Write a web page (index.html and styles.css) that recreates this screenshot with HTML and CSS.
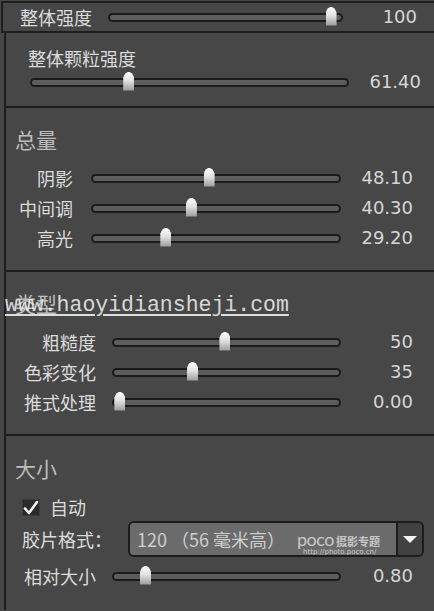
FILE: index.html
```html
<!DOCTYPE html>
<html lang="zh-CN">
<head>
  <meta charset="UTF-8">
  <title>颗粒</title>
  <link rel="stylesheet" href="styles.css">
</head>
<body>
  <div class="topbar">
    <span class="label">整体强度</span>
    <div class="track"><span class="thumb" style="left: 95.7%"></span></div>
    <span class="value">100</span>
  </div>

  <div class="panel">
    <div class="sec grain">
      <div class="grain-title">整体颗粒强度</div>
      <div class="grain-row">
        <div class="track"><span class="thumb" style="left: 30.7%"></span></div>
        <span class="value">61.40</span>
      </div>
    </div>

    <div class="sec">
      <div class="heading">总量</div>
      <div class="row narrow">
        <span class="label">阴影</span>
        <div class="track"><span class="thumb" style="left: 47.2%"></span></div>
        <span class="value">48.10</span>
      </div>
      <div class="row narrow">
        <span class="label">中间调</span>
        <div class="track"><span class="thumb" style="left: 40%"></span></div>
        <span class="value">40.30</span>
      </div>
      <div class="row narrow">
        <span class="label">高光</span>
        <div class="track"><span class="thumb" style="left: 29.6%"></span></div>
        <span class="value">29.20</span>
      </div>
    </div>

    <div class="sec">
      <div class="heading">类型</div>
      <div class="row wide">
        <span class="label">粗糙度</span>
        <div class="track"><span class="thumb" style="left: 49.3%"></span></div>
        <span class="value">50</span>
      </div>
      <div class="row wide">
        <span class="label">色彩变化</span>
        <div class="track"><span class="thumb" style="left: 34.9%"></span></div>
        <span class="value">35</span>
      </div>
      <div class="row wide">
        <span class="label">推式处理</span>
        <div class="track"><span class="thumb" style="left: 2.6%"></span></div>
        <span class="value">0.00</span>
      </div>
    </div>

    <div class="sec size">
      <div class="heading">大小</div>
      <div class="check-row">
        <span class="checkbox">
          <svg width="16" height="15" viewBox="0 0 16 15"><path d="M2 8.5 L6 13 L14 2" fill="none" stroke="#f4f4f4" stroke-width="2.6" stroke-linecap="round" stroke-linejoin="round"/></svg>
        </span>
        <span class="label">自动</span>
      </div>
      <div class="film-row">
        <span class="label">胶片格式：</span>
        <div class="dropdown">
          <div class="dd-field">
            <span class="dd-text">120 （56 毫米高）</span>
            <span class="poco"><b>poco</b><i>摄影专题</i><small>http://photo.poco.cn/</small></span>
          </div>
          <div class="dd-btn"><span class="arrow"></span></div>
        </div>
      </div>
      <div class="row wide last">
        <span class="label">相对大小</span>
        <div class="track"><span class="thumb" style="left: 14%"></span></div>
        <span class="value">0.80</span>
      </div>
    </div>
  </div>

  <div class="mark">www.haoyidiansheji.com</div>
</body>
</html>
```

FILE: styles.css
```css
body {
  margin: 0;
  width: 434px;
  height: 611px;
  overflow: hidden;
  position: relative;
  background: #474747;
  font-family: "Noto Sans CJK SC", "Noto Sans", sans-serif;
  color: #dadada;
}

.label {
  font-size: 18px;
  line-height: 24px;
  color: #dcdcdc;
  white-space: nowrap;
}

.value {
  font-family: "DejaVu Sans", sans-serif;
  font-size: 18px;
  line-height: 24px;
  color: #d6d6d6;
  text-align: right;
}

/* slider */
.track {
  position: relative;
  height: 9px;
  box-sizing: border-box;
  border: 2px solid #1b1b1b;
  border-radius: 5px;
  background: #5d5d5d;
}

.thumb {
  position: absolute;
  top: -8px;
  width: 11px;
  height: 19px;
  margin-left: -5.5px;
  background: linear-gradient(#fbfbfb, #e2e2e2 45%, #9a9a9a);
  clip-path: polygon(50% 0, 82% 10%, 100% 32%, 100% 100%, 0 100%, 0 32%, 18% 10%);
}

/* top row */
.topbar {
  margin: 1px 0 0 1px;
  height: 28px;
  border-top: 2px solid #1e1e1e;
  border-left: 2px solid #1e1e1e;
  border-bottom: 2px solid #1e1e1e;
  padding: 0 17px 0 17px;
  display: grid;
  grid-template-columns: 88px 235px 1fr;
  align-items: center;
}

.panel {
  margin-left: 4px;
  border-left: 2px solid #1e1e1e;
}

.sec {
  height: 145px;
  padding: 17px 0 0 0;
  border-bottom: 2px solid #1e1e1e;
  box-sizing: content-box;
}

.sec + .sec {
  height: 145px;
}

.heading {
  padding-left: 9px;
  font-size: 21px;
  line-height: 28px;
  color: #bdbdbd;
  margin-bottom: 10px;
}

/* grain intensity block */
.grain {
  height: 60px;
  padding-top: 13px;
}

.grain-title {
  padding-left: 22px;
  font-size: 18px;
  line-height: 24px;
  color: #dcdcdc;
}

.grain-row {
  display: grid;
  grid-template-columns: 319px 72px;
  padding-left: 24px;
  align-items: center;
  height: 24px;
}

/* label / slider / value rows */
.row {
  display: grid;
  align-items: center;
  height: 30px;
}

.row .label {
  text-align: right;
  padding-right: 18px;
}

.row.narrow {
  grid-template-columns: 85px 250px 72px;
}

.row.wide {
  grid-template-columns: 106px 229px 72px;
}

.row.wide .label {
  padding-right: 16px;
}

/* size block */
.sec.size {
  height: 156px;
  padding-top: 18px;
  border-bottom: none;
}

.size .heading {
  margin-bottom: 11px;
}

.check-row {
  display: flex;
  align-items: center;
  height: 28px;
  padding-left: 16px;
  gap: 10px;
}

.checkbox {
  width: 18px;
  height: 17px;
  box-sizing: border-box;
  background: #2a2a2a;
  border: 1px solid #3a3a3a;
  display: flex;
  align-items: center;
  justify-content: center;
}

.film-row {
  display: flex;
  align-items: center;
  height: 36px;
  padding-left: 16px;
}

.film-row .label {
  width: 106px;
}

.dropdown {
  width: 296px;
  height: 36px;
  box-sizing: border-box;
  border: 2px solid #1c1c1c;
  border-radius: 6px;
  display: flex;
  overflow: hidden;
}

.dd-field {
  flex: 1;
  position: relative;
  background: #6b6b6b;
  display: flex;
  align-items: center;
  padding-left: 7px;
}

.dd-text {
  font-size: 18px;
  color: #cdcdcd;
  white-space: nowrap;
}

.poco {
  position: absolute;
  left: 167px;
  top: 4px;
  color: rgba(225, 225, 225, 0.8);
  white-space: nowrap;
}

.poco b {
  font-family: "Lato", sans-serif;
  font-weight: 400;
  font-size: 18px;
  letter-spacing: -0.5px;
}

.poco i {
  font-style: normal;
  font-weight: 700;
  font-size: 11px;
  margin-left: 2px;
}

.poco small {
  position: absolute;
  left: 6px;
  top: 21px;
  font-family: "DejaVu Sans", sans-serif;
  font-size: 7px;
}

.dd-btn {
  width: 24px;
  background: #414141;
  border-left: 2px solid #1c1c1c;
  display: flex;
  align-items: center;
  justify-content: center;
}

.arrow {
  width: 0;
  height: 0;
  border-left: 7px solid transparent;
  border-right: 7px solid transparent;
  border-top: 7px solid #f4f4f4;
}

.row.last {
  margin-top: 4px;
}

/* watermark over the 类型 heading */
.mark {
  position: absolute;
  left: 5px;
  top: 292px;
  font-family: "Liberation Mono", monospace;
  font-size: 21.5px;
  line-height: 26px;
  color: rgba(236, 236, 236, 0.9);
  text-decoration: underline;
  text-underline-offset: 3px;
}
```
